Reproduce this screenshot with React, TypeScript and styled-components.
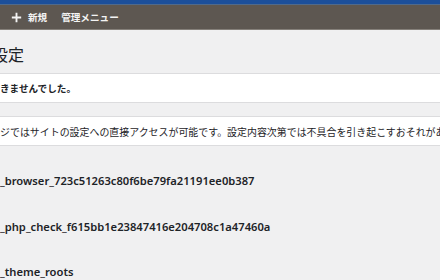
import React from 'react';
import styled, { createGlobalStyle } from 'styled-components';

const GlobalStyle = createGlobalStyle`
  html, body {
    margin: 0;
    padding: 0;
    background-color: #f0f0f1;
    overflow: hidden;
  }
  body {
    width: 440px;
    height: 280px;
    font-family: "Noto Sans", "Noto Sans CJK JP", sans-serif;
    color: #1d2327;
  }
`;

const TopStrip = styled.div`
  height: 4px;
  background-color: #1b4f9b;
  border-bottom: 1px solid #4f6a8c;
`;

const AdminBar = styled.div`
  display: flex;
  align-items: center;
  height: 24px;
  padding-left: 11px;
  background-color: #5d5751;
  border-bottom: 1px solid #85807a;
  font-family: "Noto Sans CJK JP", sans-serif;
  font-size: 9.6px;
  font-weight: 600;
  color: #f4f4f4;
`;

const BarItem = styled.span`
  display: flex;
  align-items: center;
  margin-right: 14px;
`;

const PlusIcon = styled.svg`
  width: 11px;
  height: 11px;
  margin-right: 6px;
`;

const Content = styled.div`
  display: flex;
  flex-direction: column;
`;

const Title = styled.h1`
  margin: 12px 0 7px -8px;
  font-family: "Noto Sans CJK JP", sans-serif;
  font-size: 16px;
  font-weight: 400;
  line-height: 24px;
  white-space: nowrap;
`;

const Notice = styled.div<{ $bold?: boolean }>`
  display: flex;
  align-items: center;
  height: 28px;
  margin-bottom: 13px;
  background-color: #ffffff;
  border-top: 1px solid #dcdcde;
  border-bottom: 1px solid #dcdcde;
  font-family: "Noto Sans CJK JP", sans-serif;
  font-size: ${(p) => (p.$bold ? 9.6 : 9.95)}px;
  font-weight: ${(p) => (p.$bold ? 600 : 400)};
  white-space: nowrap;
  overflow: hidden;
`;

const OptionTable = styled.div`
  display: flex;
  flex-direction: column;
  margin-top: -1px;
`;

const OptionRow = styled.div`
  display: flex;
  align-items: center;
  height: 45.5px;
  font-size: 11.2px;
  font-weight: 600;
  white-space: nowrap;
`;

const options = [
  '_browser_723c51263c80f6be79fa21191ee0b387',
  '_php_check_f615bb1e23847416e204708c1a47460a',
  '_theme_roots',
];

const App = (): JSX.Element => (
  <>
    <GlobalStyle />
    <TopStrip />
    <AdminBar>
      <BarItem>
        <PlusIcon viewBox="0 0 20 20">
          <path d="M8.3 1.5h3.4v6.8h6.8v3.4h-6.8v6.8H8.3v-6.8H1.5V8.3h6.8z" fill="#f4f4f4" />
        </PlusIcon>
        新規
      </BarItem>
      <BarItem>管理メニュー</BarItem>
    </AdminBar>
    <Content>
      <Title>設定</Title>
      <Notice $bold>きませんでした。</Notice>
      <Notice>
        ジではサイトの設定への直接アクセスが可能です。設定内容次第では不具合を引き起こすおそれがあります。注意してください。
      </Notice>
      <OptionTable>
        {options.map((name) => (
          <OptionRow key={name}>{name}</OptionRow>
        ))}
      </OptionTable>
    </Content>
  </>
);

export default App;
